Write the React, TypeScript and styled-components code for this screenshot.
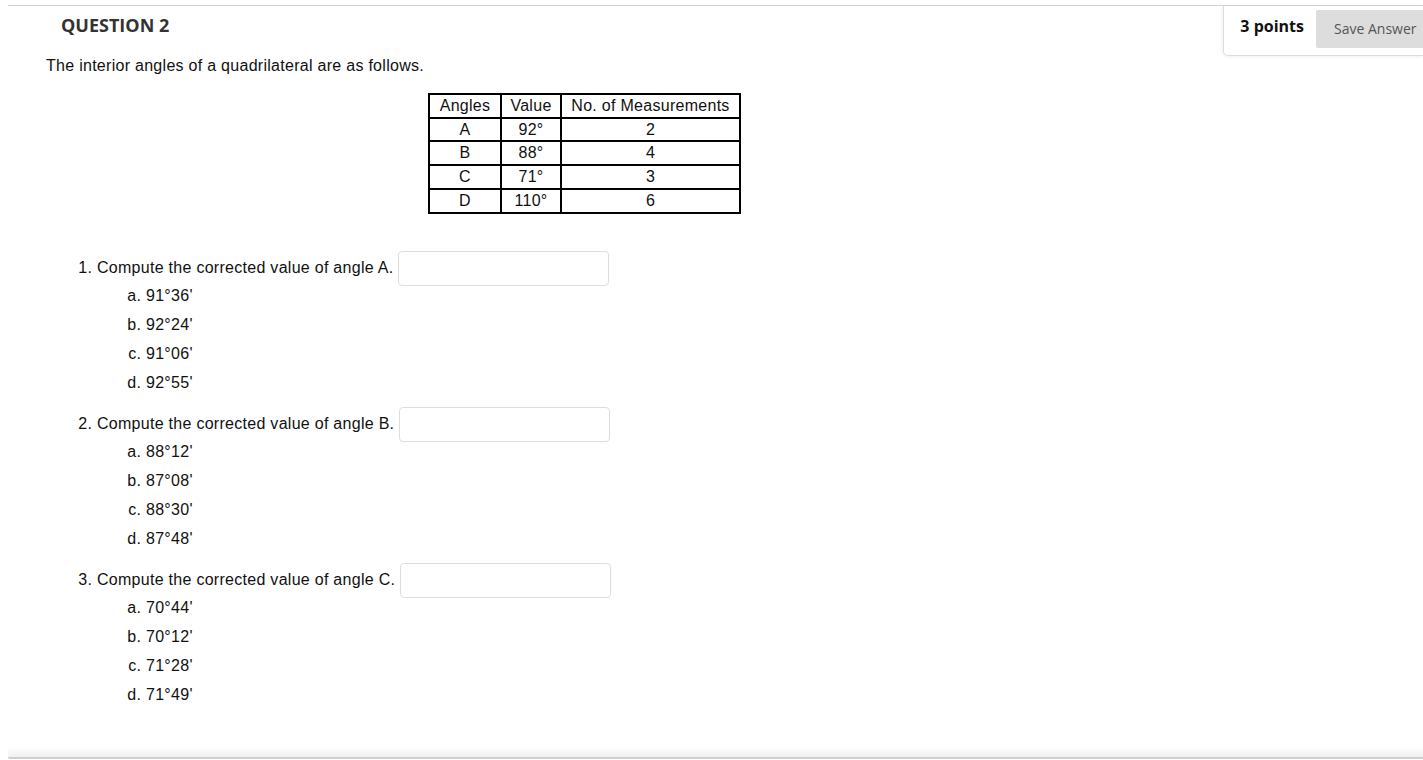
import React from "react";
import styled, { createGlobalStyle } from "styled-components";

const GlobalStyle = createGlobalStyle`
  html, body { margin: 0; padding: 0; background: #fff; }
  body { overflow: hidden; }
  * { box-sizing: border-box; }
`;

const Page = styled.div`
  padding: 5px 0 0 8px;
  font-family: "Liberation Sans", Arial, sans-serif;
`;

const QuestionBlock = styled.section`
  border-top: 1px solid #d3d3d3;
`;

const Header = styled.header`
  display: flex;
  justify-content: space-between;
  align-items: flex-start;
`;

const Title = styled.h2`
  margin: 7px 0 0 53px;
  font: 700 18px/24px "Open Sans", sans-serif;
  color: #333;
`;

const PointsBox = styled.div`
  display: flex;
  align-items: flex-start;
  gap: 12px;
  padding: 4px 0 7px 16px;
  border-left: 1px solid #dcdcdc;
  border-bottom: 1px solid #dcdcdc;
  border-bottom-left-radius: 5px;
  box-shadow: -1px 1px 3px rgba(0, 0, 0, 0.06);
`;

const Points = styled.span`
  margin-top: 5px;
  font: 700 16px/22px "Open Sans", sans-serif;
  color: #111;
`;

const SaveButton = styled.button`
  height: 38px;
  width: 107px;
  padding: 0 0 2px 18px;
  text-align: left;
  border: none;
  border-radius: 2px 0 0 2px;
  background: #dddddd;
  color: #555;
  font: 400 14px "Open Sans", sans-serif;
`;

const Body = styled.div`
  padding-left: 38px;
  color: #111;
  font-size: 16px;
  letter-spacing: 0.28px;
`;

const Prompt = styled.p`
  margin: 0;
  font: 400 16px/20px "Liberation Sans", Arial, sans-serif;
`;

const DataTable = styled.table`
  margin: 17px 0 0 382px;
  border-collapse: collapse;
  border: 2px solid #000;
  table-layout: fixed;
  width: 311px;
  font: 400 16px "Liberation Sans", Arial, sans-serif;
  color: #111;
`;

const Cell = styled.td`
  border: 2px solid #000;
  padding: 0;
  line-height: 21.7px;
  text-align: center;
  white-space: nowrap;
`;

const QuestionList = styled.ol`
  margin: 40px 0 0;
  padding-left: 51px;
  font: 400 16px "Liberation Sans", Arial, sans-serif;
  color: #111;
`;

const QuestionItem = styled.li`
  line-height: 28.75px;
  & + & { margin-top: 12.25px; }
`;

const AnswerInput = styled.input`
  display: inline-block;
  vertical-align: middle;
  width: 211px;
  height: 35px;
  margin: -4px 0;
  padding: 0 6px;
  border: 1px solid #dedede;
  border-radius: 4px;
  background: #fff;
  font: 400 16px "Liberation Sans", Arial, sans-serif;
`;

const OptionList = styled.ol`
  margin: 0;
  padding-left: 49px;
  list-style-type: lower-alpha;
`;

const Option = styled.li`
  line-height: 28.75px;
`;

const Footer = styled.div`
  margin-top: 38px;
  height: 12px;
  border-bottom: 2px solid #cfcfcf;
  background: linear-gradient(to bottom, rgba(0, 0, 0, 0), rgba(0, 0, 0, 0.06));
  border-bottom-left-radius: 2px;
`;

const tableRows = [
  ["A", "92°", "2"],
  ["B", "88°", "4"],
  ["C", "71°", "3"],
  ["D", "110°", "6"],
];

const questions = [
  { angle: "A", options: ["91°36'", "92°24'", "91°06'", "92°55'"] },
  { angle: "B", options: ["88°12'", "87°08'", "88°30'", "87°48'"] },
  { angle: "C", options: ["70°44'", "70°12'", "71°28'", "71°49'"] },
];

export default function App() {
  return (
    <>
      <GlobalStyle />
      <Page>
        <QuestionBlock>
          <Header>
            <Title>QUESTION 2</Title>
            <PointsBox>
              <Points>3 points</Points>
              <SaveButton type="button">Save Answer</SaveButton>
            </PointsBox>
          </Header>
          <Body>
            <Prompt>The interior angles of a quadrilateral are as follows.</Prompt>
            <DataTable>
              <colgroup>
                <col style={{ width: 72 }} />
                <col style={{ width: 60 }} />
                <col style={{ width: 179 }} />
              </colgroup>
              <tbody>
                <tr>
                  <Cell>Angles</Cell>
                  <Cell>Value</Cell>
                  <Cell>No. of Measurements</Cell>
                </tr>
                {tableRows.map((r) => (
                  <tr key={r[0]}>
                    <Cell>{r[0]}</Cell>
                    <Cell>{r[1]}</Cell>
                    <Cell>{r[2]}</Cell>
                  </tr>
                ))}
              </tbody>
            </DataTable>
            <QuestionList>
              {questions.map((q) => (
                <QuestionItem key={q.angle}>
                  Compute the corrected value of angle {q.angle}. <AnswerInput type="text" aria-label={`Angle ${q.angle}`} />
                  <OptionList>
                    {q.options.map((o) => (
                      <Option key={o}>{o}</Option>
                    ))}
                  </OptionList>
                </QuestionItem>
              ))}
            </QuestionList>
          </Body>
          <Footer />
        </QuestionBlock>
      </Page>
    </>
  );
}
